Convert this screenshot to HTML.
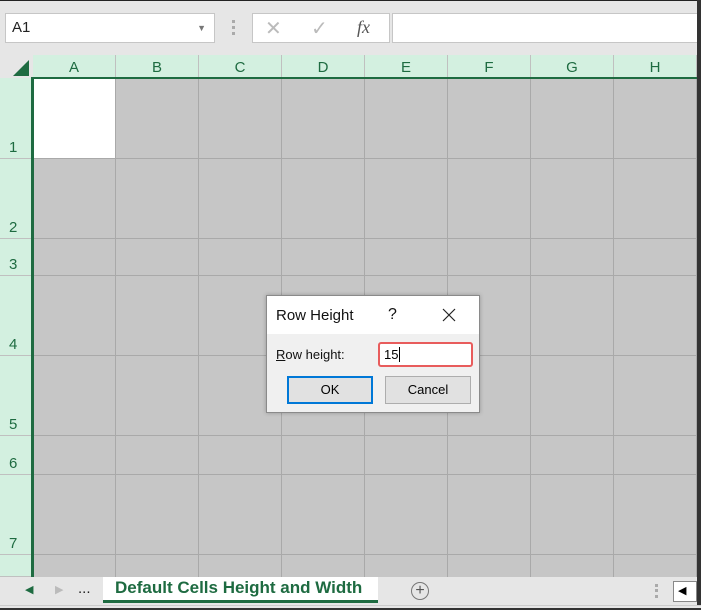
<!DOCTYPE html>
<html><head><style>
*{margin:0;padding:0;box-sizing:border-box}
html,body{width:701px;height:610px;overflow:hidden}
body{background:#e6e6e6;font-family:"Liberation Sans",sans-serif;position:relative}
.a{position:absolute}
.ch{position:absolute;top:55px;height:23px;background:#d3f0e0;border-right:1px solid #c0c0c0;color:#1e6b41;font-size:15px;text-align:center;line-height:25px}
.rh{position:absolute;left:0;width:33px;background:#d3f0e0;border-bottom:1px solid #c0c0c0;color:#1e6b41;font-size:15px;padding-left:9px;display:flex;align-items:flex-end;padding-bottom:2px}
.vl{position:absolute;top:78px;height:499px;width:1px;background:#a9a9a9}
.hl{position:absolute;left:33px;width:664px;height:1px;background:#a9a9a9}
</style></head><body>
<div class="a" style="left:0;top:0;width:701px;height:1px;background:#222"></div>
<div class="a" style="left:5px;top:13px;width:210px;height:30px;background:#fff;border:1px solid #c6c6c6;font-size:15px;line-height:28px;padding-left:6px;color:#222">A1<span class="a" style="right:8px;top:0;font-size:9px;color:#777">▼</span></div>
<div class="a" style="left:232px;top:20px;width:3px;height:15px;border-left:3px dotted #aaa"></div>
<div class="a" style="left:252px;top:13px;width:138px;height:30px;background:#fff;border:1px solid #c6c6c6;color:#bbb;font-size:20px">
<span class="a" style="left:12px;top:2px">✕</span><span class="a" style="left:58px;top:2px">✓</span><span class="a" style="left:104px;top:3px;color:#555;font-style:italic;font-family:'Liberation Serif',serif;font-size:18px">fx</span></div>
<div class="a" style="left:392px;top:13px;width:309px;height:30px;background:#fff;border:1px solid #c6c6c6"></div>
<div class="a" style="left:0;top:55px;width:33px;height:23px;background:#e6e6e6"></div>
<div class="a" style="left:13px;top:60px;width:0;height:0;border-left:16px solid transparent;border-bottom:16px solid #1e6b41"></div>
<div class="ch" style="left:33px;width:83px">A</div>
<div class="ch" style="left:116px;width:83px">B</div>
<div class="ch" style="left:199px;width:83px">C</div>
<div class="ch" style="left:282px;width:83px">D</div>
<div class="ch" style="left:365px;width:83px">E</div>
<div class="ch" style="left:448px;width:83px">F</div>
<div class="ch" style="left:531px;width:83px">G</div>
<div class="ch" style="left:614px;width:83px">H</div>
<div class="rh" style="top:78px;height:81px">1</div>
<div class="rh" style="top:159px;height:80px">2</div>
<div class="rh" style="top:239px;height:37px">3</div>
<div class="rh" style="top:276px;height:80px">4</div>
<div class="rh" style="top:356px;height:80px">5</div>
<div class="rh" style="top:436px;height:39px">6</div>
<div class="rh" style="top:475px;height:80px">7</div>
<div class="rh" style="top:555px;height:22px"></div>
<div class="a" style="left:33px;top:78px;width:664px;height:499px;background:#c6c6c6"></div>
<div class="vl" style="left:115px"></div><div class="vl" style="left:198px"></div><div class="vl" style="left:281px"></div><div class="vl" style="left:364px"></div><div class="vl" style="left:447px"></div><div class="vl" style="left:530px"></div><div class="vl" style="left:613px"></div><div class="vl" style="left:696px"></div>
<div class="hl" style="top:158px"></div><div class="hl" style="top:238px"></div><div class="hl" style="top:275px"></div><div class="hl" style="top:355px"></div><div class="hl" style="top:435px"></div><div class="hl" style="top:474px"></div><div class="hl" style="top:554px"></div>
<div class="a" style="left:34px;top:79px;width:81px;height:79px;background:#fff"></div>
<div class="a" style="left:31px;top:77px;width:666px;height:2px;background:#1e6b41"></div>
<div class="a" style="left:31px;top:77px;width:3px;height:500px;background:#1e6b41"></div>
<div class="a" style="left:697px;top:0;width:4px;height:610px;background:#333"></div>
<!-- dialog -->
<div class="a" style="left:266px;top:295px;width:214px;height:118px;background:#f0f0f0;border:1px solid #8a8a8a;box-shadow:0 0 4px rgba(0,0,0,.25)">
<div class="a" style="left:0;top:0;width:212px;height:38px;background:#fff"></div>
<div class="a" style="left:9px;top:11px;font-size:15px;color:#111">Row Height</div>
<div class="a" style="left:121px;top:10px;font-size:16px;color:#111">?</div>
<svg class="a" style="left:175px;top:12px" width="14" height="14"><path d="M1 1L13 13M13 1L1 13" stroke="#222" stroke-width="1.2"/></svg>
<div class="a" style="left:9px;top:51px;font-size:13px;color:#111"><u>R</u>ow height:</div>
<div class="a" style="left:111px;top:46px;width:95px;height:25px;background:#fff;border:2px solid #e85c5c;border-radius:3px;font-size:13px;line-height:21px;padding-left:4px">15<span style="border-left:1px solid #000;margin-left:1px"></span></div>
<div class="a" style="left:20px;top:80px;width:86px;height:28px;background:#e1e1e1;border:2px solid #0078d7;font-size:13px;text-align:center;line-height:24px">OK</div>
<div class="a" style="left:118px;top:80px;width:86px;height:28px;background:#e1e1e1;border:1px solid #adadad;font-size:13px;text-align:center;line-height:26px">Cancel</div>
</div>
<!-- tab bar -->
<div class="a" style="left:0;top:577px;width:697px;height:28px;background:#e6e6e6"></div>
<div class="a" style="left:25px;top:583px;font-size:11px;color:#1e6b41">◀</div>
<div class="a" style="left:55px;top:583px;font-size:11px;color:#bbb">▶</div>
<div class="a" style="left:78px;top:580px;font-size:15px;color:#222">...</div>
<div class="a" style="left:103px;top:577px;width:275px;height:26px;background:#fff;border-bottom:3px solid #1e6b41;font-size:17px;font-weight:bold;color:#1e6b41;line-height:22px;padding-left:12px;white-space:nowrap;overflow:hidden">Default Cells Height and Width</div>
<div class="a" style="left:411px;top:582px;width:18px;height:18px;border:1px solid #777;border-radius:50%;text-align:center;line-height:15px;color:#555;font-size:16px">+</div>
<div class="a" style="left:655px;top:584px;width:3px;height:14px;border-left:3px dotted #aaa"></div>
<div class="a" style="left:673px;top:581px;width:24px;height:21px;background:#fff;border:1px solid #888;font-size:11px;line-height:19px;padding-left:4px">◀</div>
<div class="a" style="left:0;top:605px;width:701px;height:5px;background:#e6e6e6;border-top:1px solid #ccc"></div>
<div class="a" style="left:0;top:608px;width:701px;height:2px;background:#333"></div>
</body></html>
